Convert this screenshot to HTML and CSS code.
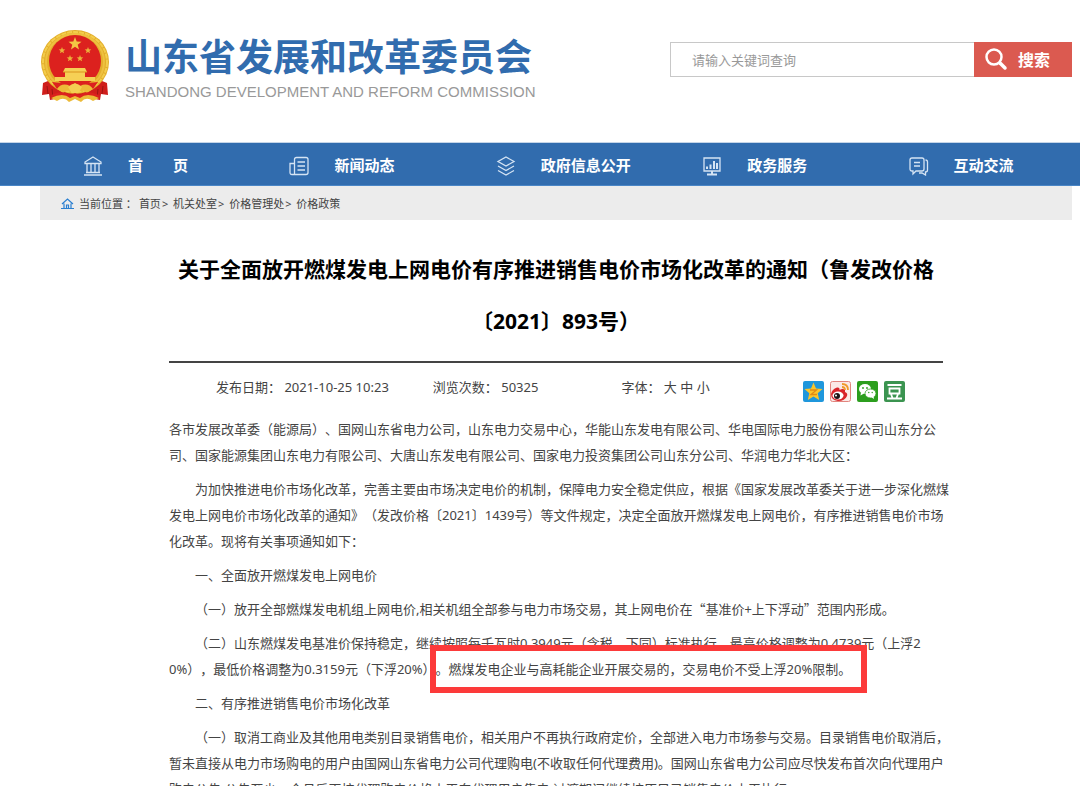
FILE: index.html
```html
<!DOCTYPE html>
<html lang="zh-CN">

<head>
    <meta charset="UTF-8">
    <meta name="viewport" content="width=device-width, initial-scale=1.0">
    <title>山东省发展和改革委员会</title>
    <link rel="stylesheet" href="styles.css">
</head>

<body>
    <header class="header wrap">
        <a class="logo" href="#">
            <svg class="emblem" viewBox="0 0 70 74" aria-hidden="true">
                <path d="M8 52 L3 54 L2 66 L9 65 L10 71 L35 66 L60 71 L61 65 L68 66 L67 54 L62 52z" fill="#cf1d1b"/>
                <path d="M7 57 l1 8 M12 60 l1 9 M58 60 l-1 9 M63 57 l-1 8" stroke="#9c1512" stroke-width="1" fill="none"/>
                <ellipse cx="35" cy="33" rx="34" ry="32" fill="#e3ae2b"/>
                <ellipse cx="35" cy="33" rx="32" ry="30" fill="none" stroke="#f3cd4c" stroke-width="2" stroke-dasharray="5 1"/>
                <ellipse cx="35" cy="33" rx="29" ry="28" fill="none" stroke="#eec040" stroke-width="2"/>
                <ellipse cx="35" cy="32" rx="26" ry="26" fill="#dc211e"/>
                <path d="M35 8 l1.700 4.600 4.800.2 -3.800 3 1.300 4.700 -4-2.700 -4 2.700 1.300-4.700 -3.800-3 4.800-.2z" fill="#f3c644"/>
                <path id="star" d="M22 18 l.9 2.300 2.400.1 -1.900 1.500 .7 2.300 -2.100-1.300 -2.100 1.300 .7-2.300 -1.900-1.500 2.400-.1z" fill="#ecb03a"/>
                <use href="#star" x="26"/>
                <use href="#star" x="8" y="8"/>
                <use href="#star" x="18" y="8"/>
                <path d="M25 39 h20 l2 4 h-24z M25 43 h20 v5 h-20z M15 48 h40 v4 h-40z" fill="#f6d055"/>
                <path d="M23 43 h24" stroke="#d9941f" stroke-width="1"/>
                <path d="M12 53 Q35 56 58 53 L53 60 Q35 58 17 60z" fill="#dc211e"/>
                <path d="M17 60 Q22 53 30 57 L35 54 L40 57 Q48 53 53 60 L47 64 Q40 58 35 64 Q30 58 23 64z" fill="#ecba38"/>
                <path d="M28 58 Q35 51 42 58 L39 63 L35 65 L31 63z" fill="#f4cf52"/>
                <path d="M10 67 Q22 60 30 66 L35 64 L40 66 Q48 60 60 67 L54 70 Q46 65 40 70 L35 68 L30 70 Q24 65 16 70z" fill="#dc211e"/>
                <path d="M11 69 Q23 63 30 69 L35 67 L40 69 Q47 63 59 69 L53 72 Q46 67 41 73 L35 70 L29 73 Q24 67 17 72z" fill="#ecba38"/>
            </svg>
            <span class="logo-text">
                <strong>山东省发展和改革委员会</strong>
                <span class="logo-en">SHANDONG DEVELOPMENT AND REFORM COMMISSION</span>
            </span>
        </a>
        <form class="search" role="search">
            <input type="text" aria-label="关键词" placeholder="请输入关键词查询">
            <button type="submit">
                <svg width="24" height="24" viewBox="0 0 24 24" fill="none" stroke="#fff" stroke-linecap="round" aria-hidden="true">
                    <circle cx="10" cy="10" r="7.500" stroke-width="2.500"/>
                    <path d="M16 16 L21 21" stroke-width="3.500"/>
                </svg>
                搜索
            </button>
        </form>
    </header>

    <nav class="nav">
        <ul class="wrap">
            <li><a href="#">
                <svg class="nav-icon" viewBox="0 0 20 20" aria-hidden="true">
                    <path d="M10 1 L18 6 V7.500 H2 V6z M3 16.500 H17 M1 19 H19 M4 8 V16 M8 8 V16 M12 8 V16 M16 8 V16"/>
                </svg>
                <span>首　　页</span>
            </a></li>
            <li><a href="#">
                <svg class="nav-icon" viewBox="0 0 20 20" aria-hidden="true">
                    <path d="M5.500 18.500 V3.500 Q5.500 1.500 7.500 1.500 H17 Q19 1.500 19 3.500 V16.500 Q19 18.500 17 18.500 H3 Q1 18.500 1 16.500 V7.500 H5.500 M8.500 6 H16 M8.500 10 H16 M8.500 14 H16"/>
                </svg>
                <span>新闻动态</span>
            </a></li>
            <li><a href="#">
                <svg class="nav-icon" viewBox="0 0 20 20" aria-hidden="true">
                    <path d="M10 1 L18 5.500 L10 10 L2 5.500z M2 10 L10 14.500 L18 10 M2 14.500 L10 19 L18 14.500"/>
                </svg>
                <span>政府信息公开</span>
            </a></li>
            <li><a href="#">
                <svg class="nav-icon" viewBox="0 0 20 20" aria-hidden="true">
                    <path d="M2 2 H18 V15 H2z"/>
                    <path d="M5 13 V10.500 M8.500 13 V8.500 M12 13 V5 M15 13 V7 M10 15 V18 M5 18.500 H15" stroke-width="2"/>
                </svg>
                <span>政务服务</span>
            </a></li>
            <li><a href="#">
                <svg class="nav-icon" viewBox="0 0 20 20" aria-hidden="true">
                    <path d="M3 2 H13 Q15 2 15 4 V13 Q15 15 13 15 H7 L4 18 V15 H3 Q1 15 1 13 V4 Q1 2 3 2z M5 6.500 H11 M5 10 H11 M16.500 4 Q18.500 4 18.500 6 V14 Q18.500 16 16.500 16 V19 L13 17 H10"/>
                </svg>
                <span>互动交流</span>
            </a></li>
        </ul>
    </nav>

    <div class="crumb wrap">
        <svg width="13" height="11" viewBox="0 0 13 11" fill="none" stroke="#2a7fd0" aria-hidden="true">
            <path d="M1 6 L6.500 1 L12 6 M3 5.500 V10 M10 5.500 V10 M0 10.500 H13 M5.500 10 V7 H7.500 V10" stroke-width="1.200"/>
        </svg>
        <span>当前位置 ：<a href="#">首页</a>&gt; <a href="#">机关处室</a>&gt; <a href="#">价格管理处</a>&gt; <a href="#">价格政策</a></span>
    </div>

    <main class="article wrap">
        <h1>关于全面放开燃煤发电上网电价有序推进销售电价市场化改革的通知（鲁发改价格<br>〔2021〕893号）</h1>

        <div class="info">
            <span class="date">发布日期： 2021-10-25 10:23</span>
            <span class="views">浏览次数： 50325</span>
            <span class="size">字体： <a href="#">大</a> <a href="#">中</a> <a href="#">小</a></span>
            <span class="share">
                <a href="#" aria-label="QQ空间">
                    <svg viewBox="0 0 21 21">
                        <rect width="21" height="21" rx="2" fill="#1f97dc"/>
                        <path d="M10.500 1.500 L13 7.500 L19.500 8 L14.700 12.300 L16.200 19 L10.500 15.500 L4.800 19 L6.300 12.300 L1.500 8 L8 7.500z" fill="#fcc52a"/>
                        <path d="M7 9 H13.500 L8 13.500 H14" fill="none" stroke="#e08a15" stroke-width="1.300"/>
                    </svg>
                </a>
                <a href="#" aria-label="新浪微博">
                    <svg viewBox="0 0 21 21">
                        <rect x=".5" y=".5" width="20" height="20" rx="2" fill="#fbe9e6" stroke="#e2857e"/>
                        <path d="M1 13 Q2 8 7 6.500 Q10 6 9.500 9 Q13 7 15 9 L15 11 Q18 12 17 15 Q15 20 8 20 Q1 19 1 13z" fill="#d9242a"/>
                        <ellipse cx="8" cy="14.500" rx="5.500" ry="4" fill="#fff"/>
                        <circle cx="7" cy="15" r="3" fill="#1b1414"/>
                        <circle cx="6" cy="14.500" r="1" fill="#fff"/>
                        <path d="M12 3 Q18 3 18 9 M12 6 Q15 6 15 9" fill="none" stroke="#f09a2b" stroke-width="1.800"/>
                    </svg>
                </a>
                <a href="#" aria-label="微信">
                    <svg viewBox="0 0 21 21">
                        <rect width="21" height="21" rx="2" fill="#2c9e1e"/>
                        <ellipse cx="8" cy="8" rx="6" ry="5" fill="#fff"/>
                        <path d="M4 11 L3.500 14.500 L7 12.500z" fill="#fff"/>
                        <ellipse cx="13.500" cy="12.500" rx="5.500" ry="4.500" fill="#fff" stroke="#2c9e1e" stroke-width=".8"/>
                        <path d="M14 16 L17 18 L16.500 15z" fill="#fff"/>
                        <g fill="#2c9e1e"><circle cx="6" cy="7" r=".9"/><circle cx="10" cy="7" r=".9"/><circle cx="11.800" cy="11.500" r=".7"/><circle cx="15.200" cy="11.500" r=".7"/></g>
                    </svg>
                </a>
                <a href="#" aria-label="豆瓣">
                    <svg viewBox="0 0 21 21">
                        <rect width="21" height="21" rx="2" fill="#3b9450"/>
                        <path d="M3.500 4 H17.500 M5.500 7.500 H15.500 V12.500 H5.500z M7 13 L8.500 17 M14 13 L12.500 17 M3 17.500 H18" fill="none" stroke="#fff" stroke-width="1.800"/>
                    </svg>
                </a>
            </span>
        </div>

        <div class="content">
            <p class="to">各市发展改革委（能源局）、国网山东省电力公司，山东电力交易中心，华能山东发电有限公司、华电国际电力股份有限公司山东分公<br>司、国家能源集团山东电力有限公司、大唐山东发电有限公司、国家电力投资集团公司山东分公司、华润电力华北大区：</p>
            <p>为加快推进电价市场化改革，完善主要由市场决定电价的机制，保障电力安全稳定供应，根据《国家发展改革委关于进一步深化燃煤<br>发电上网电价市场化改革的通知》（发改价格〔2021〕1439号）等文件规定，决定全面放开燃煤发电上网电价，有序推进销售电价市场<br>化改革。现将有关事项通知如下：</p>
            <p>一、全面放开燃煤发电上网电价</p>
            <p>（一）放开全部燃煤发电机组上网电价,相关机组全部参与电力市场交易，其上网电价在<span class="quote">“基准价+上下浮动”</span>范围内形成。</p>
            <p>（二）山东燃煤发电基准价保持稳定，继续按照每千瓦时0.3949元（含税，下同）标准执行，最高价格调整为0.4739元（上浮2<br>0%），最低价格调整为0.3159元（下浮20%）<span class="marked">。燃煤发电企业与高耗能企业开展交易的，交易电价不受上浮20%限制。</span></p>
            <p>二、有序推进销售电价市场化改革</p>
            <p>（一）取消工商业及其他用电类别目录销售电价，相关用户不再执行政府定价，全部进入电力市场参与交易。目录销售电价取消后，<br>暂未直接从电力市场购电的用户由国网山东省电力公司代理购电(不收取任何代理费用)。国网山东省电力公司应尽快发布首次向代理用户<br>购电公告,公告至少一个月后再按代理购电价格水平向代理用户售电,过渡期间继续按原目录销售电价水平执行。</p>
        </div>
    </main>
</body>

</html>
```
FILE: styles.css
```css
html {
    scrollbar-width: none;
}

body {
    margin: 0;
    background-color: #fff;
    font-family: "Noto Sans", "Noto Sans CJK SC", sans-serif;
    font-size: 13px;
    color: #444;
    text-spacing-trim: space-all;
}

a {
    color: inherit;
    text-decoration: none;
}

.wrap {
    margin: 0 8px 0 40px;
}

/* header */
.header {
    display: flex;
    justify-content: space-between;
    align-items: flex-start;
    height: 113px;
    padding-top: 29px;
}

.logo {
    display: flex;
    gap: 15px;
}

.emblem {
    width: 70px;
    height: 74px;
}

.logo-text {
    display: flex;
    flex-direction: column;
    white-space: nowrap;
}

.logo-text strong {
    font-family: "Noto Sans CJK SC", sans-serif;
    font-size: 37px;
    line-height: 52px;
    color: #316cae;
}

.logo-en {
    font-family: "Liberation Sans", Arial, sans-serif;
    font-size: 15px;
    line-height: 21px;
    color: #999;
}

.search {
    display: flex;
    width: 402px;
    height: 35px;
    margin-top: 13px;
}

.search input {
    flex: 1;
    min-width: 0;
    box-sizing: border-box;
    padding: 0 21px;
    border: 1px solid #c8c8c8;
    border-right: none;
    font: inherit;
    color: #444;
}

.search input::placeholder {
    color: #999;
}

.search button {
    display: flex;
    align-items: center;
    gap: 10px;
    width: 98px;
    padding: 0 10px 2px;
    border: none;
    background-color: #db5a50;
    color: #fff;
    font: bold 16px "Noto Sans CJK SC", sans-serif;
    white-space: nowrap;
    cursor: pointer;
}

/* main menu */
.nav {
    background-color: #316cae;
    border-top: 1px solid #c5d5e8;
    border-bottom: 1px solid #4a86c6;
}

.nav ul {
    display: grid;
    grid-template-columns: repeat(5, 1fr);
    padding: 0;
    list-style: none;
}

.nav a {
    display: flex;
    align-items: center;
    gap: 25px;
    height: 42px;
    padding-left: 43px;
    color: #fff;
    font-size: 15px;
    font-weight: bold;
    white-space: nowrap;
}

.nav-icon {
    width: 20px;
    height: 20px;
    padding-top: 3px;
    fill: none;
    stroke: #d5e4f4;
    stroke-width: 1.3;
}

.crumb {
    display: flex;
    align-items: center;
    gap: 5px;
    height: 34px;
    padding-left: 21px;
    background-color: #ececec;
    font-size: 11px;
}

.crumb a {
    margin: 0 1px 0 2px;
}

/* article */
.article {
    padding: 23px 129px 0;
}

.article h1 {
    margin: 0;
    padding-bottom: 14px;
    border-bottom: 2px solid #444;
    color: #000;
    font-size: 21px;
    line-height: 52px;
    text-align: center;
    white-space: nowrap;
}

.info {
    display: flex;
    align-items: center;
    height: 46px;
    padding: 0 38px 0 47px;
    white-space: nowrap;
}

.date {
    margin-right: 44px;
}

.views {
    margin-right: 83px;
}

.share {
    display: flex;
    gap: 6px;
    margin-left: auto;
    padding-top: 10px;
}

.share svg {
    display: block;
    width: 21px;
    height: 21px;
}

.content {
    padding-top: 7px;
    line-height: 26px;
    white-space: nowrap;
}

.content p {
    margin: 0 0 8px;
    text-indent: 2em;
}

.content .to {
    text-indent: 0;
}

/* full-width quotation marks */
.quote {
    font-family: "Noto Sans CJK SC", sans-serif;
}

.marked {
    position: relative;
}

/* red frame round the marked sentence */
.marked::after {
    content: "";
    position: absolute;
    top: -15px;
    right: -16px;
    bottom: -15px;
    left: -6px;
    border: 6px solid #fc3a3a;
}
```
